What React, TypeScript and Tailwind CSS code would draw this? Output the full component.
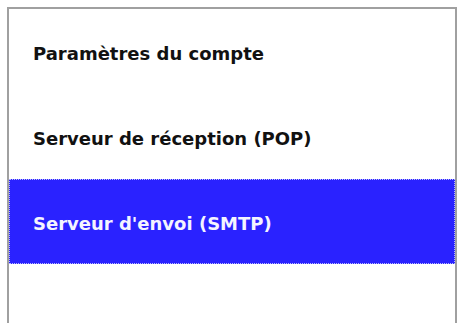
const items = [
  { label: 'Paramètres du compte', selected: false },
  { label: 'Serveur de réception (POP)', selected: false },
  { label: "Serveur d'envoi (SMTP)", selected: true },
]

export default function App() {
  return (
    <div className="w-[460px] h-[323px] overflow-hidden bg-white pt-[7px] pl-[7px] pr-[3px]">
      <div
        className="h-[340px] border-l-2 border-t-2 border-r-2 border-[#a0a0a0] bg-white"
        style={{ fontFamily: '"DejaVu Sans", Verdana, sans-serif' }}
      >
        <ul className="flex flex-col">
          {items.map((item) => (
            <li
              key={item.label}
              className={
                item.selected
                  ? 'h-[85px] flex items-center pl-6 pt-1 text-[18px] font-bold text-[#f4f4ff] bg-[#2a22ff] outline-1 outline-dotted outline-[#b8b8ff] -outline-offset-1'
                  : 'h-[85px] flex items-center pl-6 pt-1 text-[18px] font-bold text-[#111111]'
              }
            >
              {item.label}
            </li>
          ))}
        </ul>
      </div>
    </div>
  )
}
